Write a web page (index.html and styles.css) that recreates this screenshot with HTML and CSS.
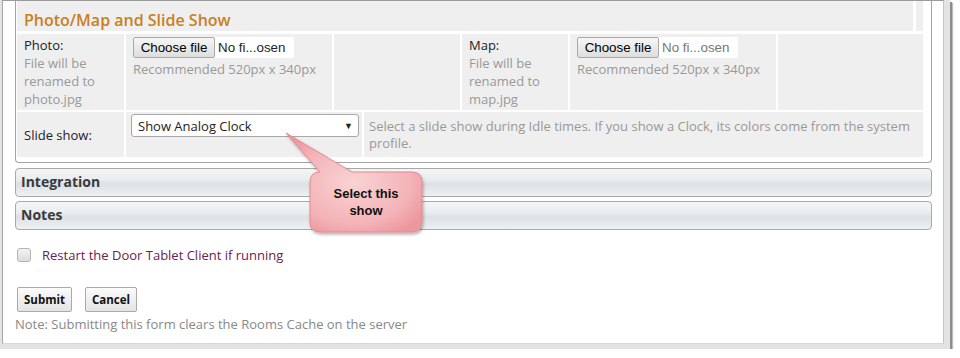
FILE: index.html
```html
<!DOCTYPE html>
<html lang="en">

<head>
    <meta charset="UTF-8" />
    <title>Door Tablet - Display Settings</title>
    <link rel="stylesheet" href="styles.css">
</head>

<body>
    <div class="frame">
        <div class="sheet">
            <div class="box">
                <div class="row row-head">
                    <div class="cell head">Photo/Map and Slide Show</div>
                    <div class="cell"></div>
                </div>
                <div class="row row-files">
                    <div class="cell label">
                        Photo:
                        <div class="hint">File will be renamed to photo.jpg</div>
                    </div>
                    <div class="cell upload">
                        <label class="file-pick">
                            <input type="file" class="file" name="photo">
                            <span class="file-btn">Choose file</span>
                            <span class="file-name">No fi...osen</span>
                        </label>
                        <div class="hint">Recommended 520px x 340px</div>
                    </div>
                    <div class="cell"></div>
                    <div class="cell label">
                        Map:
                        <div class="hint">File will be renamed to map.jpg</div>
                    </div>
                    <div class="cell upload">
                        <label class="file-pick">
                            <input type="file" class="file" name="map">
                            <span class="file-btn">Choose file</span>
                            <span class="file-name light">No fi...osen</span>
                        </label>
                        <div class="hint">Recommended 520px x 340px</div>
                    </div>
                    <div class="cell"></div>
                </div>
                <div class="row row-slide">
                    <div class="cell label middle">Slide show:</div>
                    <div class="cell pick">
                        <div class="select-wrap">
                            <select class="select">
                                <option>Show Analog Clock</option>
                                <option>Show Digital Clock</option>
                                <option>Photos</option>
                                <option>None</option>
                            </select>
                            <span class="arrow">&#9660;</span>
                        </div>
                    </div>
                    <div class="cell hint desc">Select a slide show during Idle times. If you show a Clock, its colors come from the system profile.</div>
                </div>
            </div>

            <div class="bar">Integration</div>
            <div class="bar">Notes</div>

            <label class="check">
                <input type="checkbox" class="checkbox">
                Restart the Door Tablet Client if running
            </label>

            <div class="buttons">
                <button class="btn">Submit</button>
                <button class="btn">Cancel</button>
            </div>
            <p class="note">Note: Submitting this form clears the Rooms Cache on the server</p>

            <div class="callout">
                <svg width="150" height="112" viewBox="0 0 150 112">
                    <defs>
                        <radialGradient id="pink" cx="50%" cy="50%" r="60%">
                            <stop offset="0%" stop-color="#f9d3d4" />
                            <stop offset="70%" stop-color="#f4b3b7" />
                            <stop offset="100%" stop-color="#ec979d" />
                        </radialGradient>
                        <filter id="drop" x="-20%" y="-20%" width="150%" height="150%">
                            <feDropShadow dx="1" dy="2" stdDeviation="1.5" flood-color="#000" flood-opacity="0.3" />
                        </filter>
                    </defs>
                    <path d="M40 44 L6 5 L72 44 H132 Q142 44 142 54 V94 Q142 104 132 104 H40 Q30 104 30 94 V54 Q30 44 40 44 Z"
                        fill="url(#pink)" stroke="#e48a91" stroke-width="1" filter="url(#drop)" />
                </svg>
                <div class="callout-text">Select this show</div>
            </div>
        </div>
    </div>
</body>

</html>
```

FILE: styles.css
```css
* {
    margin: 0;
    padding: 0;
    box-sizing: border-box;
}

body {
    background: #fff;
    font-family: 'Open Sans', sans-serif;
    font-size: 13px;
    color: #222;
}

.frame {
    width: 950px;
    height: 349px;
    background: #e3e3e3;
    padding: 0 6px 5px 2px;
    box-shadow: 2px 2px 0 #8c8c8c, 3px 3px 1px #bdbdbd;
}

.sheet {
    position: relative;
    height: 100%;
    background: #fff;
    border-top: 1px solid #9a9a9a;
    border-left: 1px solid #a6a6a6;
    border-right: 1px solid #c4c4c4;
    border-bottom: 1px solid #d6d6d6;
    padding: 0 11px 0 12px;
}

.box {
    border: 1px solid #a4a4a4;
    border-top: none;
    border-radius: 0 0 4px 4px;
    padding: 0 8px 5px 1px;
    display: flex;
    flex-direction: column;
    gap: 3px;
}

.row {
    display: grid;
    gap: 2px;
}

.row-head {
    grid-template-columns: 1fr 7px;
    gap: 3px;
    height: 30px;
}

.row-files {
    grid-template-columns: 107px 206px 126px 106px 206px 145px;
    height: 75px;
}

.row-slide {
    grid-template-columns: 107px 236px 1fr;
    height: 45px;
}

.cell {
    background: #efefef;
}

.head {
    color: #c8801c;
    font-size: 16px;
    font-weight: 600;
    padding: 8px 0 0 7px;
}

.label {
    padding: 2px 7px;
    line-height: 18px;
    color: #222;
}

.middle {
    display: flex;
    align-items: center;
}

.hint {
    color: #999;
    line-height: 18px;
}

.upload {
    padding: 3px 7px;
}

.file-pick {
    display: flex;
    align-items: center;
    width: 161px;
    height: 21px;
    margin-bottom: 2px;
    background: #fff;
    font-family: 'Liberation Sans', Arial, sans-serif;
    font-size: 13.33px;
    cursor: pointer;
}

.file {
    display: none;
}

.file-btn {
    height: 21px;
    width: 82px;
    display: flex;
    align-items: center;
    justify-content: center;
    border: 1px solid #a9a9a9;
    border-radius: 2px;
    background: linear-gradient(#f6f6f6, #dedede);
    color: #000;
}

.file-name {
    padding-left: 3px;
    color: #222;
}

.file-name.light {
    color: #777;
}

.pick {
    padding: 2px 3px 0 5px;
}

.select-wrap {
    position: relative;
    width: 228px;
}

.select {
    appearance: none;
    width: 100%;
    height: 23px;
    border: 1px solid #a8a8a8;
    border-radius: 3px;
    background: #fff;
    font-family: 'Open Sans', sans-serif;
    font-size: 13px;
    color: #222;
    padding: 0 6px;
}

.arrow {
    position: absolute;
    right: 6px;
    top: 5px;
    font-size: 9px;
    color: #222;
}

.desc {
    padding: 6px 5px 0 5px;
    line-height: 17px;
}

.bar {
    margin-top: 5px;
    height: 29px;
    border: 1px solid #a8a8a8;
    border-radius: 4px;
    background: linear-gradient(#f3f5f6 0%, #eaedef 40%, #dde1e4 55%, #eef1f3 100%);
    color: #3a3a3a;
    font-size: 14px;
    font-weight: 700;
    padding: 3px 0 0 5px;
}

.bar + .bar {
    margin-top: 4px;
}

.check {
    display: flex;
    align-items: center;
    gap: 11px;
    margin: 16px 0 0 2px;
    color: #6b2152;
}

.checkbox {
    appearance: none;
    width: 14px;
    height: 14px;
    border: 1px solid #b4b4b4;
    border-radius: 3px;
    background: linear-gradient(#f2f2f2, #dcdcdc);
}

.buttons {
    display: flex;
    gap: 13px;
    margin: 23px 0 0 2px;
}

.btn {
    height: 25px;
    padding: 0 6px;
    border: 1px solid #aaa;
    border-radius: 2px;
    background: linear-gradient(#fbfbfb, #e4e4e4);
    font-family: 'Open Sans', sans-serif;
    font-size: 11.5px;
    font-weight: 700;
    color: #111;
}

.note {
    margin-top: 3px;
    color: #888;
}

.callout {
    position: absolute;
    left: 277px;
    top: 127px;
    width: 150px;
    height: 112px;
}

.callout svg {
    display: block;
}

.callout-text {
    position: absolute;
    left: 30px;
    top: 44px;
    width: 112px;
    height: 60px;
    display: flex;
    align-items: center;
    justify-content: center;
    text-align: center;
    font-family: 'Liberation Sans', Arial, sans-serif;
    font-size: 13px;
    font-weight: 700;
    line-height: 17px;
    color: #111;
    padding: 0 20px;
}
```
